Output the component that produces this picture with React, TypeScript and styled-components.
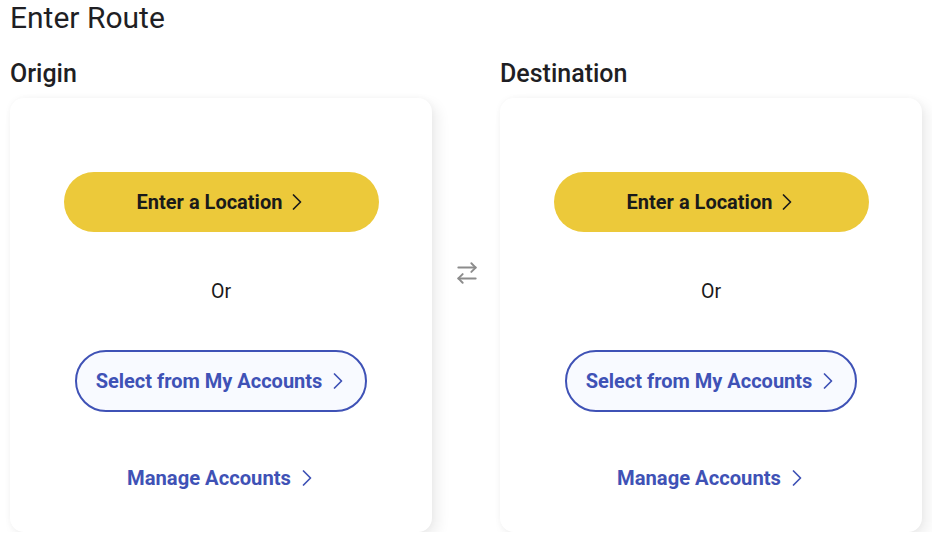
import React from "react";
import styled, { createGlobalStyle } from "styled-components";
import { ChevronRight, ArrowRightLeft } from "lucide-react";

const Global = createGlobalStyle`
  html, body { margin: 0; padding: 0; background: #ffffff; }
  body { font-family: Roboto, "Noto Sans", Arial, sans-serif; color: #1f1f24; }
`;

const Page = styled.div`
  padding: 0 0 0 10px;
  width: 932px;
  box-sizing: border-box;
`;

const Title = styled.h1`
  margin: 0;
  padding-top: 2px;
  font-size: 30px;
  font-weight: 400;
  line-height: 32px;
  color: #1f1f24;
`;

const Columns = styled.div`
  display: grid;
  grid-template-columns: 422px 68px 422px;
  margin-top: 26px;
`;

const Column = styled.section`
  display: flex;
  flex-direction: column;
`;

const Heading = styled.h2`
  margin: 0 0 10px 0;
  font-size: 25px;
  font-weight: 500;
  line-height: 28px;
  color: #1f1f24;
`;

const Card = styled.div`
  background: #ffffff;
  border-radius: 14px;
  box-shadow: 6px 6px 14px rgba(0, 0, 0, 0.07), 0 0 6px rgba(0, 0, 0, 0.04);
  height: 434px;
  box-sizing: border-box;
  padding-top: 74px;
  display: flex;
  flex-direction: column;
  align-items: center;
`;

const PrimaryButton = styled.button`
  width: 315px;
  height: 60px;
  border: none;
  border-radius: 30px;
  background: #ecc93a;
  color: #1a1a1a;
  font-family: Roboto, Arial, sans-serif;
  font-size: 20px;
  font-weight: 700;
  display: flex;
  align-items: center;
  justify-content: center;
  gap: 1px;
  cursor: pointer;
  padding: 0 0 0 6px;
`;

const OrText = styled.div`
  margin-top: 48px;
  font-size: 19.5px;
  line-height: 24px;
  color: #1a1a1a;
`;

const OutlineButton = styled.button`
  margin-top: 46px;
  width: 292px;
  height: 62px;
  box-sizing: border-box;
  border: 2px solid #3f52b6;
  border-radius: 31px;
  background: #f8faff;
  color: #3f52b6;
  font-family: Roboto, Arial, sans-serif;
  font-size: 20px;
  font-weight: 700;
  display: flex;
  align-items: center;
  justify-content: center;
  gap: 2px;
  padding: 0 0 0 6px;
  cursor: pointer;
`;

const LinkButton = styled.a`
  margin-top: 52px;
  padding-left: 6px;
  color: #3f52b6;
  font-size: 20.2px;
  font-weight: 700;
  line-height: 24px;
  display: flex;
  align-items: center;
  gap: 2px;
  text-decoration: none;
  cursor: pointer;
`;

const SwapColumn = styled.div`
  display: flex;
  justify-content: center;
  padding-top: 200px;
  padding-left: 2px;
`;

const SwapIcon = styled.div`
  color: #8c8c8c;
  width: 26px;
  height: 26px;
  display: flex;
  align-items: center;
  justify-content: center;
`;

const Chevron = () => <ChevronRight size={28} strokeWidth={1.5} />;

const RouteCard: React.FC<{ label: string }> = ({ label }) => (
  <Column>
    <Heading>{label}</Heading>
    <Card>
      <PrimaryButton>
        Enter a Location
        <Chevron />
      </PrimaryButton>
      <OrText>Or</OrText>
      <OutlineButton>
        Select from My Accounts
        <Chevron />
      </OutlineButton>
      <LinkButton>
        Manage Accounts
        <Chevron />
      </LinkButton>
    </Card>
  </Column>
);

export default function App() {
  return (
    <Page>
      <Global />
      <Title>Enter Route</Title>
      <Columns>
        <RouteCard label="Origin" />
        <SwapColumn>
          <SwapIcon>
            <ArrowRightLeft size={26} strokeWidth={1.8} />
          </SwapIcon>
        </SwapColumn>
        <RouteCard label="Destination" />
      </Columns>
    </Page>
  );
}
